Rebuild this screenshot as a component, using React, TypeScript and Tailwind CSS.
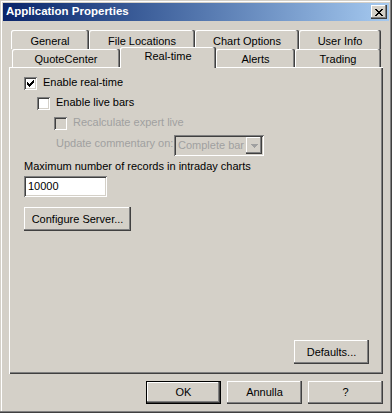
import React from "react";

const RAISED =
  "shadow-[inset_-1px_-1px_#404040,inset_-2px_-2px_#808080,inset_1px_1px_#ffffff]";
const SUNKEN =
  "shadow-[inset_1px_1px_#808080,inset_-1px_-1px_#ffffff,inset_2px_2px_#404040,inset_-2px_-2px_#d4d0c8]";
const TAB =
  "shadow-[inset_-1px_0_#404040,inset_-2px_0_#808080,inset_1px_1px_#ffffff] rounded-t-[2px]";

function Pixels({ rows, w, h, color }: { rows: [number, number, number][]; w: number; h: number; color: string }) {
  return (
    <svg width={w} height={h} viewBox={`0 0 ${w} ${h}`} shapeRendering="crispEdges">
      {rows.map(([y, x, width], i) => (
        <rect key={i} x={x} y={y} width={width} height={1} fill={color} />
      ))}
    </svg>
  );
}

const CHECK: [number, number, number][] = [
  [0, 6, 1],
  [1, 5, 2],
  [2, 0, 1],
  [2, 4, 3],
  [3, 0, 2],
  [3, 3, 3],
  [4, 0, 5],
  [5, 1, 3],
  [6, 2, 1],
];

const XMARK: [number, number, number][] = [
  [0, 0, 2],
  [0, 6, 2],
  [1, 1, 2],
  [1, 5, 2],
  [2, 2, 4],
  [3, 3, 2],
  [4, 2, 4],
  [5, 1, 2],
  [5, 5, 2],
  [6, 0, 2],
  [6, 6, 2],
];

const ARROW: [number, number, number][] = [
  [0, 0, 7],
  [1, 1, 5],
  [2, 2, 3],
  [3, 3, 1],
];

function Check({ checked, disabled }: { checked?: boolean; disabled?: boolean }) {
  return (
    <div
      className={`w-[13px] h-[13px] shrink-0 flex items-center justify-center ${SUNKEN} ${
        disabled ? "bg-[#d4d0c8]" : "bg-white"
      }`}
    >
      {checked && <Pixels rows={CHECK} w={7} h={7} color="#000" />}
    </div>
  );
}

function Button({
  label,
  w,
  h,
  isDefault,
}: {
  label: string;
  w: string;
  h: string;
  isDefault?: boolean;
}) {
  if (isDefault) {
    return (
      <div className={`${w} ${h} border border-black flex`}>
        <div className={`flex-1 flex items-center justify-center ${RAISED}`}>{label}</div>
      </div>
    );
  }
  return <div className={`${w} ${h} flex items-center justify-center ${RAISED}`}>{label}</div>;
}

function Tab({ label, w, pt, selected }: { label: string; w: string; pt: string; selected?: boolean }) {
  if (selected) {
    return (
      <div
        className={`${w} h-[21px] -mt-[2px] relative z-10 bg-[#d4d0c8] ${TAB} flex justify-center ${pt} leading-[13px]`}
      >
        {label}
      </div>
    );
  }
  return (
    <div className={`${w} h-full ${TAB} bg-[#d4d0c8] flex justify-center ${pt} leading-[13px]`}>
      {label}
    </div>
  );
}

export default function App() {
  return (
    <div
      className={`w-[392px] h-[413px] bg-[#d4d0c8] p-[3px] flex flex-col text-[11px] text-black font-['Liberation_Sans',Arial,sans-serif] shadow-[inset_-1px_-1px_#404040,inset_-2px_-2px_#808080,inset_1px_1px_#d4d0c8,inset_2px_2px_#ffffff]`}
    >
      {/* Title bar */}
      <div className="h-[18px] flex items-center bg-linear-to-r from-[#0a246a] to-[#a6caf0]">
        <span className="pl-[3px] text-white font-bold text-[11.5px] leading-none flex-1">
          Application Properties
        </span>
        <div className={`w-[16px] h-[14px] mr-[2px] bg-[#d4d0c8] flex items-center justify-center ${RAISED}`}>
          <Pixels rows={XMARK} w={8} h={7} color="#000" />
        </div>
      </div>

      {/* Tab control */}
      <div className="mt-[9px] ml-[6px] w-[374px] flex flex-col">
        <div className="h-[19px] pl-[2px] flex">
          <Tab label="General" w="w-[78px]" pt="pt-[5px]" />
          <Tab label="File Locations" w="w-[106px]" pt="pt-[5px]" />
          <Tab label="Chart Options" w="w-[104px]" pt="pt-[5px]" />
          <Tab label="User Info" w="w-[82px]" pt="pt-[5px]" />
        </div>
        <div className="h-[18px] pl-[3px] flex items-start">
          <Tab label="QuoteCenter" w="w-[108px]" pt="pt-[4px]" />
          <Tab label="Real-time" w="w-[96px]" pt="pt-[3px]" selected />
          <Tab label="Alerts" w="w-[79px]" pt="pt-[4px]" />
          <Tab label="Trading" w="w-[86px]" pt="pt-[4px]" />
        </div>

        {/* Panel */}
        <div className="h-[307px] flex flex-col shadow-[inset_1px_1px_#ffffff,inset_-1px_-1px_#404040,inset_-2px_-2px_#808080]">
          <div className="pl-[15px] pt-[10px] flex flex-col leading-[13px]">
            <div className="flex items-center gap-[6px]">
              <Check checked />
              <span className="-mt-[2px]">Enable real-time</span>
            </div>
            <div className="mt-[7px] ml-[13px] flex items-center gap-[6px]">
              <Check />
              <span className="-mt-[2px]">Enable live bars</span>
            </div>
            <div className="mt-[7px] ml-[30px] flex items-center gap-[6px] text-[#a0a0a0]">
              <Check disabled />
              <span className="-mt-[2px]">Recalculate expert live</span>
            </div>
            <div className="mt-[5px] ml-[32px] flex items-center text-[#a0a0a0]">
              <span className="w-[118px] shrink-0 whitespace-nowrap -mt-[4px]">Update commentary on:</span>
              <div className={`w-[90px] h-[21px] bg-[#d4d0c8] flex items-center p-[2px] ${SUNKEN}`}>
                <span className="flex-1 min-w-0 pl-[2px] whitespace-nowrap overflow-hidden">Complete bar</span>
                <div className={`w-[16px] h-[17px] shrink-0 flex items-center justify-center bg-[#d4d0c8] ${RAISED}`}>
                  <Pixels rows={ARROW} w={7} h={4} color="#a0a0a0" />
                </div>
              </div>
            </div>
            <div className="mt-[4px]">Maximum number of records in intraday charts</div>
            <div className={`mt-[3px] w-[83px] h-[21px] bg-white flex items-center pl-[4px] ${SUNKEN}`}>
              10000
            </div>
            <div className="mt-[10px]">
              <Button label="Configure Server..." w="w-[107px]" h="h-[24px]" />
            </div>
          </div>
          <div className="flex-1" />
          <div className="flex justify-end pr-[14px] pb-[10px]">
            <Button label="Defaults..." w="w-[75px]" h="h-[24px]" />
          </div>
        </div>
      </div>

      {/* Bottom buttons */}
      <div className="mt-[7px] flex justify-end gap-[6px] pr-[6px]">
        <Button label="OK" w="w-[75px]" h="h-[23px]" isDefault />
        <Button label="Annulla" w="w-[75px]" h="h-[23px]" />
        <Button label="?" w="w-[75px]" h="h-[23px]" />
      </div>
    </div>
  );
}
